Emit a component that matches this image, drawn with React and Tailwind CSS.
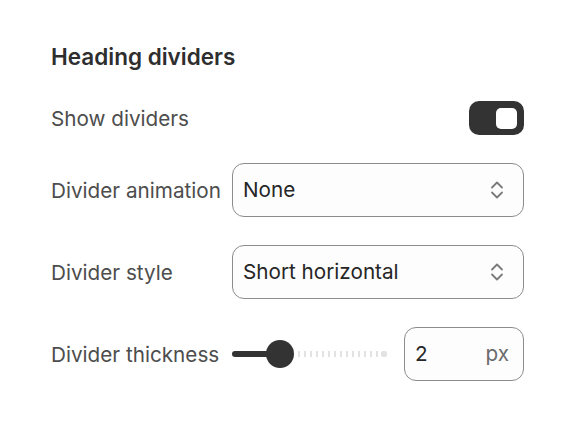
const font = { fontFamily: 'Inter, "Liberation Sans", sans-serif' };

function Chevrons() {
    return (
        <svg width="14" height="20" viewBox="0 0 14 20" fill="none" stroke="#7a7a7a" strokeWidth="1.8" strokeLinecap="round" strokeLinejoin="round">
            <path d="M2 7.5 7 2.5 12 7.5" />
            <path d="M2 12.5 7 17.5 12 12.5" />
        </svg>
    );
}

function Select({ value }) {
    return (
        <div className="flex-1 h-[54px] flex items-center justify-between pl-[10px] pr-[19px] rounded-[12px] border border-[#8c8c8c] bg-[#fdfdfd]">
            <span className="text-[20.7px] text-[#262626]">{value}</span>
            <Chevrons />
        </div>
    );
}

const dashes = Array.from({ length: 14 });

export default function App() {
    return (
        <div className="w-full min-h-screen bg-white pl-[51px] pr-[49px] pt-[42px]" style={font}>
            <h2 className="text-[22.5px] leading-[30px] font-semibold text-[#2e2e2e] mb-[29px]">Heading dividers</h2>

            <div className="flex flex-col gap-[28px]">
                {/* Show dividers */}
                <div className="flex items-center justify-between h-[34px]">
                    <span className="text-[20.7px] leading-[28px] pt-[1px] text-[#4d4d4d]">Show dividers</span>
                    <div className="w-[55px] h-[34px] rounded-[10px] bg-[#333333] flex items-center justify-end pr-[7px]">
                        <div className="w-[21px] h-[21px] rounded-[5px] bg-white" />
                    </div>
                </div>

                {/* Divider animation */}
                <div className="flex items-center">
                    <span className="w-[181px] shrink-0 text-[20.7px] leading-[28px] pt-[1px] text-[#4d4d4d]">Divider animation</span>
                    <Select value="None" />
                </div>

                {/* Divider style */}
                <div className="flex items-center">
                    <span className="w-[181px] shrink-0 text-[20.7px] leading-[28px] pt-[1px] text-[#4d4d4d]">Divider style</span>
                    <Select value="Short horizontal" />
                </div>

                {/* Divider thickness */}
                <div className="flex items-center">
                    <span className="w-[181px] shrink-0 text-[20.7px] leading-[28px] pt-[1px] text-[#4d4d4d] whitespace-nowrap">Divider thickness</span>
                    <div className="flex items-center">
                        <div className="w-[38px] h-[6px] rounded-l-full bg-[#333333]" />
                        <div className="w-[28px] h-[28px] -ml-[4px] rounded-full bg-[#333333]" />
                        <div className="flex items-center gap-[4px] ml-[4px]">
                            {dashes.map((_, i) => (
                                <div key={i} className="w-[2px] h-[6px] bg-[#e2e2e2]" />
                            ))}
                        </div>
                        <div className="w-[6px] h-[6px] ml-[3px] rounded-[2px] bg-[#e2e2e2]" />
                    </div>
                    <div className="ml-auto w-[120px] h-[54px] flex items-center justify-between pl-[10px] pr-[14px] rounded-[12px] border border-[#8c8c8c] bg-[#fdfdfd]">
                        <span className="text-[20.7px] text-[#262626]">2</span>
                        <span className="text-[20.7px] text-[#6b6b6b]">px</span>
                    </div>
                </div>
            </div>
        </div>
    );
}
